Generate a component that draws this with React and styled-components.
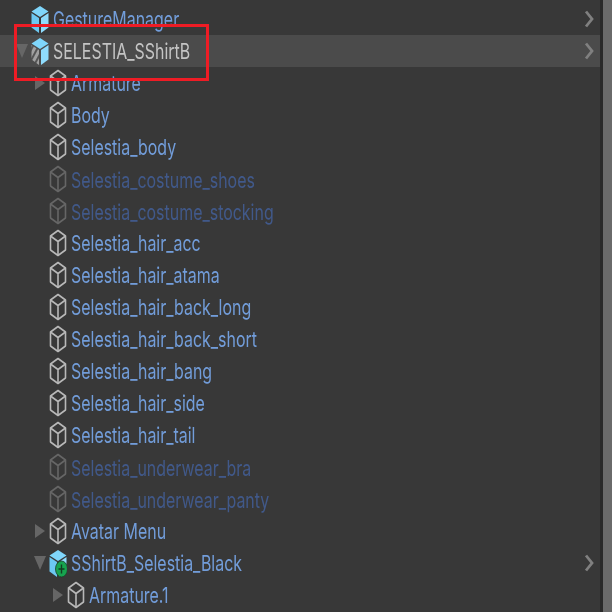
import React from 'react'
import styled, { createGlobalStyle } from 'styled-components'

const GlobalStyle = createGlobalStyle`
  html, body {
    margin: 0;
    padding: 0;
    background: #383838;
  }
`

const rows = [
  { name: 'GestureManager', depth: 0, icon: 'prefab', chevron: true },
  { name: 'SELESTIA_SShirtB', depth: 0, icon: 'hatched', arrow: 'down', chevron: true, selected: true },
  { name: 'Armature', depth: 1, icon: 'cube', arrow: 'right' },
  { name: 'Body', depth: 1, icon: 'cube' },
  { name: 'Selestia_body', depth: 1, icon: 'cube' },
  { name: 'Selestia_costume_shoes', depth: 1, icon: 'cube', dim: true },
  { name: 'Selestia_costume_stocking', depth: 1, icon: 'cube', dim: true },
  { name: 'Selestia_hair_acc', depth: 1, icon: 'cube' },
  { name: 'Selestia_hair_atama', depth: 1, icon: 'cube' },
  { name: 'Selestia_hair_back_long', depth: 1, icon: 'cube' },
  { name: 'Selestia_hair_back_short', depth: 1, icon: 'cube' },
  { name: 'Selestia_hair_bang', depth: 1, icon: 'cube' },
  { name: 'Selestia_hair_side', depth: 1, icon: 'cube' },
  { name: 'Selestia_hair_tail', depth: 1, icon: 'cube' },
  { name: 'Selestia_underwear_bra', depth: 1, icon: 'cube', dim: true },
  { name: 'Selestia_underwear_panty', depth: 1, icon: 'cube', dim: true },
  { name: 'Avatar Menu', depth: 1, icon: 'cube', arrow: 'right' },
  { name: 'SShirtB_Selestia_Black', depth: 1, icon: 'added', arrow: 'down', chevron: true },
  { name: 'Armature.1', depth: 2, icon: 'cube', arrow: 'right' },
]

const CubeIcon = ({ dim }) => (
  <svg width="18" height="28" viewBox="0 0 18 28">
    <g fill="none" stroke={dim ? '#666666' : '#b8b8b8'} strokeWidth="1.6" strokeLinejoin="round">
      <path d="M9 1.5 L16.5 7 V21 L9 26.5 L1.5 21 V7 Z" />
      <path d="M1.5 7 L9 12.5 L16.5 7 M9 12.5 V26.5" />
    </g>
  </svg>
)

const PrefabIcon = ({ hatched, added }) => (
  <svg width="18" height="29" viewBox="0 0 18 29">
    <defs>
      <pattern id="hatch" width="5" height="7" patternUnits="userSpaceOnUse" patternTransform="rotate(28)">
        <rect width="5" height="7" fill="#a0a0a0" />
        <rect width="2" height="7" fill="#555555" />
      </pattern>
    </defs>
    <path d="M9 1 L17.5 6.5 L9 12 L0.5 6.5 Z" fill="#7fd6fb" />
    <path d="M0.5 8 L8 13 V28 L0.5 22.5 Z" fill={hatched ? 'url(#hatch)' : '#6cc8f2'} />
    <path d="M10 13 L17.5 8 V22.5 L10 28 Z" fill="#8fdcfd" />
    {added && (
      <g>
        <ellipse cx="12.5" cy="20" rx="6" ry="8" fill="#17a34f" stroke="#1c3a26" strokeWidth="0.8" />
        <path d="M12.5 15.5 V24.5 M9.5 20 H15.5" stroke="#123d22" strokeWidth="1.4" />
      </g>
    )}
  </svg>
)

const Page = styled.div`
  position: relative;
  width: 612px;
  height: 612px;
  overflow: hidden;
  display: flex;
  background: #383838;
  font-family: Inter, 'Noto Sans', 'Liberation Sans', sans-serif;
`

const List = styled.div`
  flex: 1;
  padding-top: 3px;
  filter: blur(0.6px);
`

const Scrollbar = styled.div`
  width: 9px;
  border-left: 3px solid #292929;
  background: #6a6a6a;
`

const Row = styled.div`
  display: flex;
  align-items: center;
  height: 32px;
  padding-left: ${({ $depth }) => 13 + $depth * 18}px;
  background: ${({ $selected }) => ($selected ? '#4b4b4b' : 'transparent')};
`

const ArrowSlot = styled.div`
  width: 18px;
  height: 100%;
  flex: none;
  display: flex;
  align-items: center;
  justify-content: center;
`

const ArrowRight = styled.div`
  width: 0;
  height: 0;
  border-left: 10px solid #666666;
  border-top: 7.5px solid transparent;
  border-bottom: 7.5px solid transparent;
`

const ArrowDown = styled.div`
  width: 0;
  height: 0;
  border-top: 14px solid #666666;
  border-left: 6px solid transparent;
  border-right: 6px solid transparent;
`

const IconSlot = styled.div`
  width: 22px;
  flex: none;
  display: flex;
  align-items: center;
`

const LabelClip = styled.div`
  flex: 1;
  min-width: 0;
`

const Label = styled.span`
  display: inline-block;
  font-size: 22px;
  line-height: 32px;
  white-space: nowrap;
  transform: scaleX(0.725) translateY(${({ $dim }) => ($dim ? 1 : 0)}px);
  transform-origin: left center;
  color: ${({ $selected, $dim }) => ($selected ? '#c4c4c4' : $dim ? '#41598a' : '#729dda')};
`

const Chevron = styled.svg`
  flex: none;
  width: 10px;
  height: 18px;
  margin-right: 6px;
`

const Highlight = styled.div`
  position: absolute;
  left: 14px;
  top: 24px;
  width: 195px;
  height: 57px;
  box-sizing: border-box;
  border: 3px solid #ee1c25;
`

const App = () => (
  <Page>
    <GlobalStyle />
    <List>
      {rows.map((row) => (
        <Row key={row.name} $depth={row.depth} $selected={row.selected}>
          <ArrowSlot>
            {row.arrow === 'right' && <ArrowRight />}
            {row.arrow === 'down' && <ArrowDown />}
          </ArrowSlot>
          <IconSlot>
            {row.icon === 'cube' ? (
              <CubeIcon dim={row.dim} />
            ) : (
              <PrefabIcon hatched={row.icon === 'hatched'} added={row.icon === 'added'} />
            )}
          </IconSlot>
          <LabelClip>
            <Label $selected={row.selected} $dim={row.dim}>
              {row.name}
            </Label>
          </LabelClip>
          {row.chevron && (
            <Chevron viewBox="0 0 10 18">
              <path d="M2 1.5 L8 9 L2 16.5" fill="none" stroke="#808080" strokeWidth="2.8" />
            </Chevron>
          )}
        </Row>
      ))}
    </List>
    <Scrollbar />
    <Highlight />
  </Page>
)

export default App
